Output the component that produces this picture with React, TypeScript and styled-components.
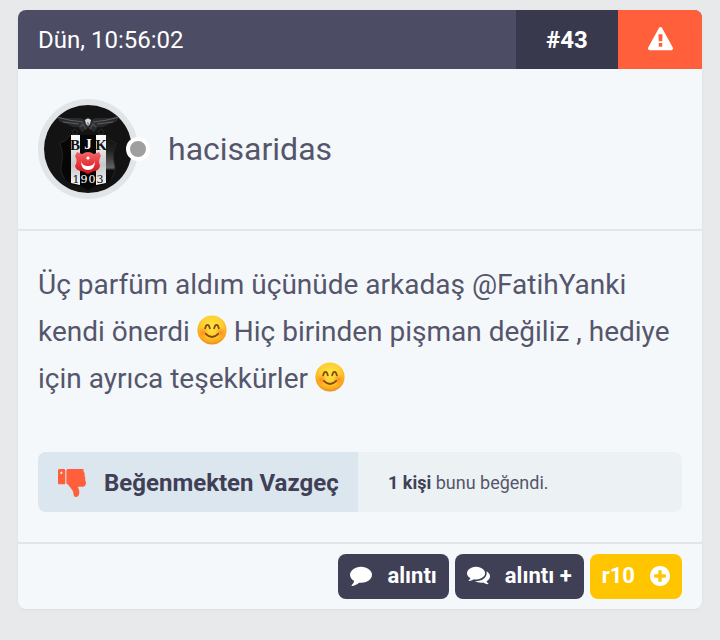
import React from "react";
import styled, { createGlobalStyle } from "styled-components";

const GlobalStyle = createGlobalStyle`
  *, *::before, *::after { box-sizing: border-box; }
  body {
    margin: 0;
    background: #e8e9eb;
    color: #55566b;
    font-family: Roboto, "Liberation Sans", sans-serif;
  }
  button { font: inherit; border: 0; cursor: pointer; }
  h2, p { margin: 0; }
`;

const Page = styled.main`
  padding: 10px 18px 31px;
`;

const Card = styled.article`
  display: flex;
  flex-direction: column;
  overflow: hidden;
  border-radius: 8px;
  background: #f4f8fb;
  box-shadow: 0 1px 3px rgba(60, 62, 84, 0.06);
`;

const TopBar = styled.header`
  display: flex;
  height: 59px;
  background: #4c4d64;
  color: #fff;
  font-size: 24px;
`;

const PostTime = styled.time`
  display: flex;
  flex: 1;
  align-items: center;
  padding-left: 20px;
`;

const PostNumber = styled.a`
  display: flex;
  width: 102px;
  align-items: center;
  justify-content: center;
  background: #39394e;
  color: #fff;
  font-weight: 700;
  text-decoration: none;
`;

const ReportButton = styled.button`
  display: flex;
  width: 84px;
  align-items: center;
  justify-content: center;
  padding: 0;
  background: #ff5f3b;
  color: #fff;
`;

const Author = styled.section`
  display: flex;
  align-items: center;
  gap: 30px;
  padding: 30px 20px;
  border-bottom: 2px solid #e2e5e9;
`;

const AvatarFrame = styled.div`
  position: relative;
  width: 100px;
  height: 100px;
  border: 6px solid #e2e5e8;
  border-radius: 50%;
`;

const StatusDot = styled.span`
  position: absolute;
  top: 32px;
  right: -18px;
  width: 24px;
  height: 24px;
  border: 4px solid #fff;
  border-radius: 50%;
  background: #9f9f9f;
`;

const AuthorName = styled.h2`
  font-size: 32px;
  font-weight: 400;
`;

const Message = styled.section`
  padding: 30px 20px;
`;

const MessageText = styled.p`
  margin-bottom: 50px;
  font-size: 28px;
  line-height: 47px;
`;

const LikeBar = styled.div`
  display: flex;
  min-height: 60px;
  overflow: hidden;
  border-radius: 8px;
  background: #ecf1f4;
`;

const UnlikeButton = styled.button`
  display: flex;
  align-items: center;
  gap: 18px;
  width: 320px;
  padding: 2px 20px 0;
  background: #dce6ee;
  color: #3f4056;
  font-size: 24px;
  font-weight: 700;
  white-space: nowrap;
`;

const LikeSummary = styled.p`
  display: flex;
  align-items: center;
  padding-left: 30px;
  font-size: 18px;
  white-space: pre;

  strong { color: #3f4056; }
`;

const Actions = styled.footer`
  display: flex;
  justify-content: flex-end;
  gap: 6px;
  padding: 10px 20px;
  border-top: 2px solid #e2e5e9;
`;

const ActionButton = styled.button<{ $accent?: boolean }>`
  display: flex;
  align-items: center;
  gap: 15px;
  height: 45px;
  padding: 0 12px 2px;
  border-radius: 8px;
  background: ${(p) => (p.$accent ? "#ffc600" : "#3f4056")};
  color: #fff;
  font-size: 22px;
  font-weight: 700;
`;

const Glyph = styled.svg<{ $width: number; $height: number; $color?: string }>`
  display: block;
  flex: none;
  width: ${(p) => p.$width}px;
  height: ${(p) => p.$height}px;
  fill: ${(p) => p.$color ?? "currentColor"};
`;

const EmojiSvg = styled.svg`
  width: 30px;
  height: 30px;
  vertical-align: -4px;
`;

const CrestSvg = styled.svg`
  display: block;
  width: 88px;
  height: 88px;
  border-radius: 50%;
`;

const icons = {
  warning: {
    box: "0 0 1792 1792",
    path: "M1024 1375v-190q0-14-9.5-23.5t-22.5-9.5h-192q-13 0-22.5 9.5t-9.5 23.5v190q0 14 9.5 23.5t22.5 9.5h192q13 0 22.5-9.5t9.5-23.5zm-2-374l18-459q0-12-10-19-13-11-24-11h-220q-11 0-24 11-10 7-10 21l17 457q0 10 10 16.5t24 6.5h185q14 0 23.5-6.5t10.5-16.5zm-14-934l768 1408q35 63-2 126-17 29-46.5 46t-63.5 17h-1536q-34 0-63.5-17t-46.5-46q-37-63-2-126l768-1408q17-31 47-49t65-18 65 18 47 49z",
  },
  thumbsDown: {
    box: "64 128 1600 1408",
    path: "M320 320q0-26-19-45t-45-19q-27 0-45.5 19t-18.5 45q0 27 18.5 45.5t45.5 18.5q26 0 45-18.5t19-45.5zm160 512v-640q0-26-19-45t-45-19h-288q-26 0-45 19t-19 45v640q0 26 19 45t45 19h288q26 0 45-19t19-45zm1129-149q55 61 55 149-1 78-57.5 135t-134.5 57h-277q4 14 8 24t11 22 10 18q18 37 27 57t19 58.5 10 76.5q0 24-.5 39t-5 45-12 50-24 45-40 40.5-60 26-82.5 10.5q-26 0-45-19-20-20-34-50t-19.5-52-12.5-61q-9-42-13.5-60.5t-17.5-48.5-31-48q-33-33-101-120-49-64-101-121t-76-59q-25-2-43-20.5t-18-43.5v-641q0-26 19-44.5t45-19.5q35-1 158-44 77-26 120.5-39.5t121.5-29 144-15.5h129q133 2 197 78 58 69 49 181 39 37 54 94 17 61 0 117 46 61 43 137 0 32-15 76z",
  },
  comment: {
    box: "0 192 1792 1600",
    path: "M1792 896q0 174-120 321.5t-326 233-450 85.5q-70 0-145-8-198 175-460 242-49 14-114 22-17 2-30.5-9t-17.5-29v-1q-3-4-.5-12t2-10 4.5-9.5l6-9 7-8.5 8-9q7-8 31-34.5t34.5-38 31-39.5 32.5-51 27-59 26-76q-157-89-247.5-220t-90.5-281q0-130 71-248.5t191-204.5 286-136.5 348-50.5 348 50.5 286 136.5 191 204.5 71 248.5z",
  },
  comments: {
    box: "0 192 1792 1536",
    path: "M1408 768q0 139-94 257t-256.5 186.5-353.5 68.5q-86 0-176-16-124 88-278 128-36 9-86 16h-3q-11 0-20.5-8t-11.5-21q-1-3-1-6.5t.5-6.5 2-6l2.5-5 3.5-5.5 4-5 4.5-5 4-4.5q5-6 23-25t26-29.5 22.5-29 25-38.5 20.5-44q-124-72-195-177t-71-224q0-139 94-257t256.5-186.5 353.5-68.5 353.5 68.5 256.5 186.5 94 257zm384 256q0 120-71 224.5t-195 176.5q10 24 20.5 44t25 38.5 22.5 29 26 29.5 23 25q1 1 4 4.5t4.5 5 4 5 3.5 5.5l2.5 5 2 6 .5 6.5-1 6.5q-3 14-13 22t-22 7q-50-7-86-16-154-40-278-128-90 16-176 16-271 0-472-132 58 4 88 4 161 0 309-45t264-129q125-92 192-212t67-254q0-77-23-152 129 71 204 178t75 230z",
  },
  plusCircle: {
    box: "128 128 1536 1536",
    path: "M1344 960v-128q0-26-19-45t-45-19h-256v-256q0-26-19-45t-45-19h-128q-26 0-45 19t-19 45v256h-256q-26 0-45 19t-19 45v128q0 26 19 45t45 19h256v256q0 26 19 45t45 19h128q26 0 45-19t19-45v-256h256q26 0 45-19t19-45zm320-64q0 209-103 385.5t-279.5 279.5-385.5 103-385.5-103-279.5-279.5-103-385.5 103-385.5 279.5-279.5 385.5-103 385.5 103 279.5 279.5 103 385.5z",
  },
};

type IconProps = { name: keyof typeof icons; width: number; height: number; color?: string };

function Icon({ name, width, height, color }: IconProps) {
  const { box, path } = icons[name];
  return (
    <Glyph
      $width={width}
      $height={height}
      $color={color}
      viewBox={box}
      preserveAspectRatio="none"
      aria-hidden="true"
    >
      <path d={path} fillRule="evenodd" />
    </Glyph>
  );
}

function SmilingFace({ id }: { id: string }) {
  return (
    <EmojiSvg viewBox="0 0 30 30" role="img" aria-label="😊">
      <defs>
        <radialGradient id={id} cx="50%" cy="36%" r="64%">
          <stop offset="0" stopColor="#ffe445" />
          <stop offset="0.55" stopColor="#ffcf30" />
          <stop offset="0.85" stopColor="#fba91d" />
          <stop offset="1" stopColor="#ec8815" />
        </radialGradient>
        <radialGradient id={id + "-cheek"}>
          <stop offset="0" stopColor="#ff7a1c" stopOpacity="0.8" />
          <stop offset="1" stopColor="#ff8a1c" stopOpacity="0" />
        </radialGradient>
      </defs>
      <circle cx="15" cy="15" r="14.6" fill={`url(#${id})`} />
      <circle cx="6.4" cy="17.5" r="5.6" fill={`url(#${id}-cheek)`} />
      <circle cx="23.6" cy="17.5" r="5.6" fill={`url(#${id}-cheek)`} />
      <g fill="none" stroke="#85490f" strokeLinecap="round">
        <path d="M8.2 13.4Q8.8 9.8 10.5 9.8T12.8 13.4M17.2 13.4Q17.8 9.8 19.5 9.8T21.8 13.4" strokeWidth="1.8" />
        <path d="M8.8 18.8Q15 25.2 21.2 18.8" strokeWidth="1.8" />
      </g>
    </EmojiSvg>
  );
}

function Crest() {
  const star = "M0-3.4 1-1.1 3.4-1 1.5.6 2.2 3 0 1.6-2.2 3-1.5.6-3.4-1-1-1.1Z";
  return (
    <CrestSvg viewBox="0 0 88 88" role="img" aria-label="hacisaridas">
      <defs>
        <linearGradient id="gloss" x1="0" y1="0" x2="0" y2="1">
          <stop offset="0" stopColor="#0c0c0c" />
          <stop offset="0.3" stopColor="#202020" />
          <stop offset="0.6" stopColor="#626262" />
          <stop offset="0.64" stopColor="#101010" />
          <stop offset="1" stopColor="#020202" />
        </linearGradient>
        <linearGradient id="silver" x1="0" y1="0" x2="0" y2="1">
          <stop offset="0" stopColor="#ffffff" />
          <stop offset="0.6" stopColor="#c8c8c8" />
          <stop offset="1" stopColor="#f4f4f4" />
        </linearGradient>
        <linearGradient id="red" x1="0" y1="0" x2="0" y2="1">
          <stop offset="0" stopColor="#f0686b" />
          <stop offset="0.5" stopColor="#e6383d" />
          <stop offset="1" stopColor="#cf101d" />
        </linearGradient>
        <clipPath id="shield">
          <path d="M26 30H62Q66 37 72 38Q68 48 70 57Q73 66 67 74Q59 82 51 81L44 85 37 81Q29 82 21 74Q15 66 18 57Q20 48 16 38Q22 37 26 30Z" />
        </clipPath>
      </defs>
      <rect width="88" height="88" fill="#131313" />
      <g clipPath="url(#shield)">
        <rect x="14" y="28" width="60" height="58" fill="#060606" />
        <rect x="62" y="28" width="14" height="58" fill="url(#gloss)" />
        <path d="M27 30H36V80L27 78ZM52 30H62V78L52 80Z" fill="url(#silver)" />
      </g>
      <path d="M26 30Q22 37 16 38Q20 48 18 57Q15 66 21 74M62 30Q66 37 72 38Q68 48 70 57Q73 66 67 74" fill="none" stroke="#2b2b2b" strokeWidth="0.8" />
      <path d="M11 9Q17 14 24 13L35 13Q39 13 40 15L44 12 48 15Q49 13 53 13L64 13Q71 13 77 9L72 17 65 19 59 22 54 22 50 27 44 23 38 27 34 22 29 22 23 19 16 17Z" fill="#2a2b2d" />
      <path d="M13 12Q26 16 39 17M19 17 35 19M75 12Q62 16 49 17M69 17 53 19" fill="none" stroke="#5e6064" strokeWidth="1" />
      <path d="M36 22 39 19 42 24M52 22 49 19 46 24" fill="none" stroke="#4a4b4e" strokeWidth="1.4" />
      <path d="M41 15Q44 12 47 15L46 19 44 21 42 19Z" fill="#d9d9d9" />
      <path d="M43 17 45 18 44 21Z" fill="#6a6c70" />
      <g fill="#080808" stroke="#444" strokeWidth="0.5">
        <path d={star} transform="translate(31 27)" />
        <path d={star} transform="translate(57 27)" />
      </g>
      <path d="M33 47 38 49Q44 45 50 49L55 47 57 51Q54 55 56 61 55 66 50 66L44 69 38 66Q32 66 31 61 34 56 31 51Z" fill="url(#red)" />
      <path d="M37 56Q37 65 44 65T51 56Q50 61 44 61T37 56Z" fill="#fff" />
      <circle cx="44" cy="53" r="1.6" fill="#fff" />
      <g fontFamily="Liberation Serif, serif" fontWeight="700" fontSize="15" textAnchor="middle">
        <text x="31" y="45" fill="#111">B</text>
        <text x="44" y="44" fill="#fff">J</text>
        <text x="57" y="45" fill="#111">K</text>
      </g>
      <g fontFamily="DejaVu Serif, serif" fontSize="11" textAnchor="middle">
        <text x="32" y="78" fill="#111">1</text>
        <text x="40" y="78" fill="#fff">9</text>
        <text x="48" y="78" fill="#fff">0</text>
        <text x="56" y="78" fill="#111">3</text>
      </g>
    </CrestSvg>
  );
}

export default function App() {
  return (
    <>
      <GlobalStyle />
      <Page>
        <Card>
          <TopBar>
            <PostTime>Dün, 10:56:02</PostTime>
            <PostNumber href="#43">#43</PostNumber>
            <ReportButton type="button" aria-label="Şikayet et">
              <Icon name="warning" width={25} height={25} />
            </ReportButton>
          </TopBar>
          <Author>
            <AvatarFrame>
              <Crest />
              <StatusDot />
            </AvatarFrame>
            <AuthorName>hacisaridas</AuthorName>
          </Author>
          <Message>
            <MessageText>
              Üç parfüm aldım üçünüde arkadaş @FatihYanki kendi önerdi <SmilingFace id="face-a" /> Hiç
              birinden pişman değiliz , hediye için ayrıca teşekkürler <SmilingFace id="face-b" />
            </MessageText>
            <LikeBar>
              <UnlikeButton type="button">
                <Icon name="thumbsDown" width={28} height={28} color="#ff5f3b" />
                Beğenmekten Vazgeç
              </UnlikeButton>
              <LikeSummary>
                <strong>1 kişi</strong> bunu beğendi.
              </LikeSummary>
            </LikeBar>
          </Message>
          <Actions>
            <ActionButton type="button">
              <Icon name="comment" width={22} height={20} />
              alıntı
            </ActionButton>
            <ActionButton type="button">
              <Icon name="comments" width={23} height={19} />
              alıntı +
            </ActionButton>
            <ActionButton type="button" $accent>
              r10
              <Icon name="plusCircle" width={20} height={20} />
            </ActionButton>
          </Actions>
        </Card>
      </Page>
    </>
  );
}
